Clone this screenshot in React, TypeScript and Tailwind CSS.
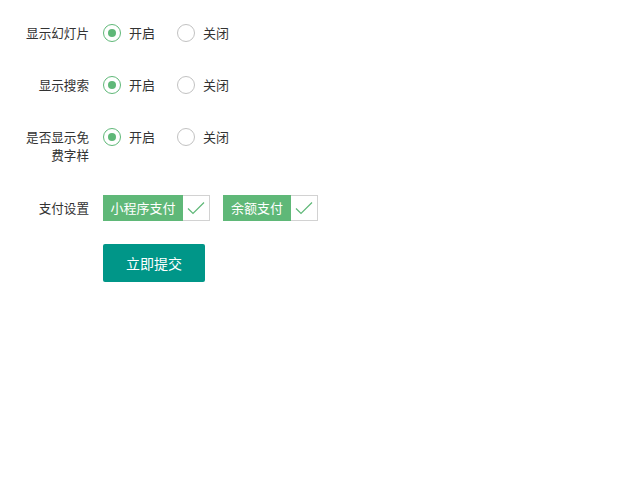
const font = { fontFamily: '"Microsoft YaHei", "Noto Sans CJK SC", sans-serif' };

const Radio = ({ label, checked }: { label: string; checked?: boolean }) => (
  <div className="flex items-center gap-[8px] mr-[22px]">
    <span
      className={`w-[18px] h-[18px] rounded-full border-[1.5px] flex items-center justify-center ${
        checked ? "border-[#5FB878]" : "border-[#c2c2c2]"
      }`}
    >
      {checked && <span className="w-[8px] h-[8px] rounded-full bg-[#5FB878]" />}
    </span>
    <span className="text-[13px] text-[#333] leading-[18px]">{label}</span>
  </div>
);

const Check = ({ label, w }: { label: string; w: string }) => (
  <div className="flex h-[26px] mr-[13px]">
    <span className={`${w} bg-[#5FB878] text-white text-[13px] leading-[26px] text-center`}>{label}</span>
    <span className="w-[27px] border border-l-0 border-[#d2d2d2] flex items-center justify-center">
      <svg width="18" height="14" viewBox="0 0 18 14" fill="none">
        <path d="M1 7.5 L6 12.5 L17 1.5" stroke="#5FB878" strokeWidth="1.2" />
      </svg>
    </span>
  </div>
);

const Label = ({ children }: { children: React.ReactNode }) => (
  <div className="w-[90px] pr-[1px] text-right text-[12.6px] text-[#333] leading-[18px] shrink-0 mr-[13px]">
    {children}
  </div>
);

export default function App() {
  return (
    <div className="w-[621px] h-[489px] bg-white pt-[24px]" style={font}>
      <div className="flex items-start mb-[34px]">
        <Label>显示幻灯片</Label>
        <div className="flex">
          <Radio label="开启" checked />
          <Radio label="关闭" />
        </div>
      </div>
      <div className="flex items-start mb-[34px]">
        <Label>显示搜索</Label>
        <div className="flex">
          <Radio label="开启" checked />
          <Radio label="关闭" />
        </div>
      </div>
      <div className="flex items-start mb-[31px]">
        <Label>
          <div className="w-[64px] ml-auto">是否显示免费字样</div>
        </Label>
        <div className="flex">
          <Radio label="开启" checked />
          <Radio label="关闭" />
        </div>
      </div>
      <div className="flex items-center mb-[23px]">
        <Label>支付设置</Label>
        <div className="flex">
          <Check label="小程序支付" w="w-[80px]" />
          <Check label="余额支付" w="w-[68px]" />
        </div>
      </div>
      <div className="pl-[103px]">
        <button className="w-[102px] h-[38px] bg-[#009688] text-white text-[14px] rounded-[2px]">
          立即提交
        </button>
      </div>
    </div>
  );
}
